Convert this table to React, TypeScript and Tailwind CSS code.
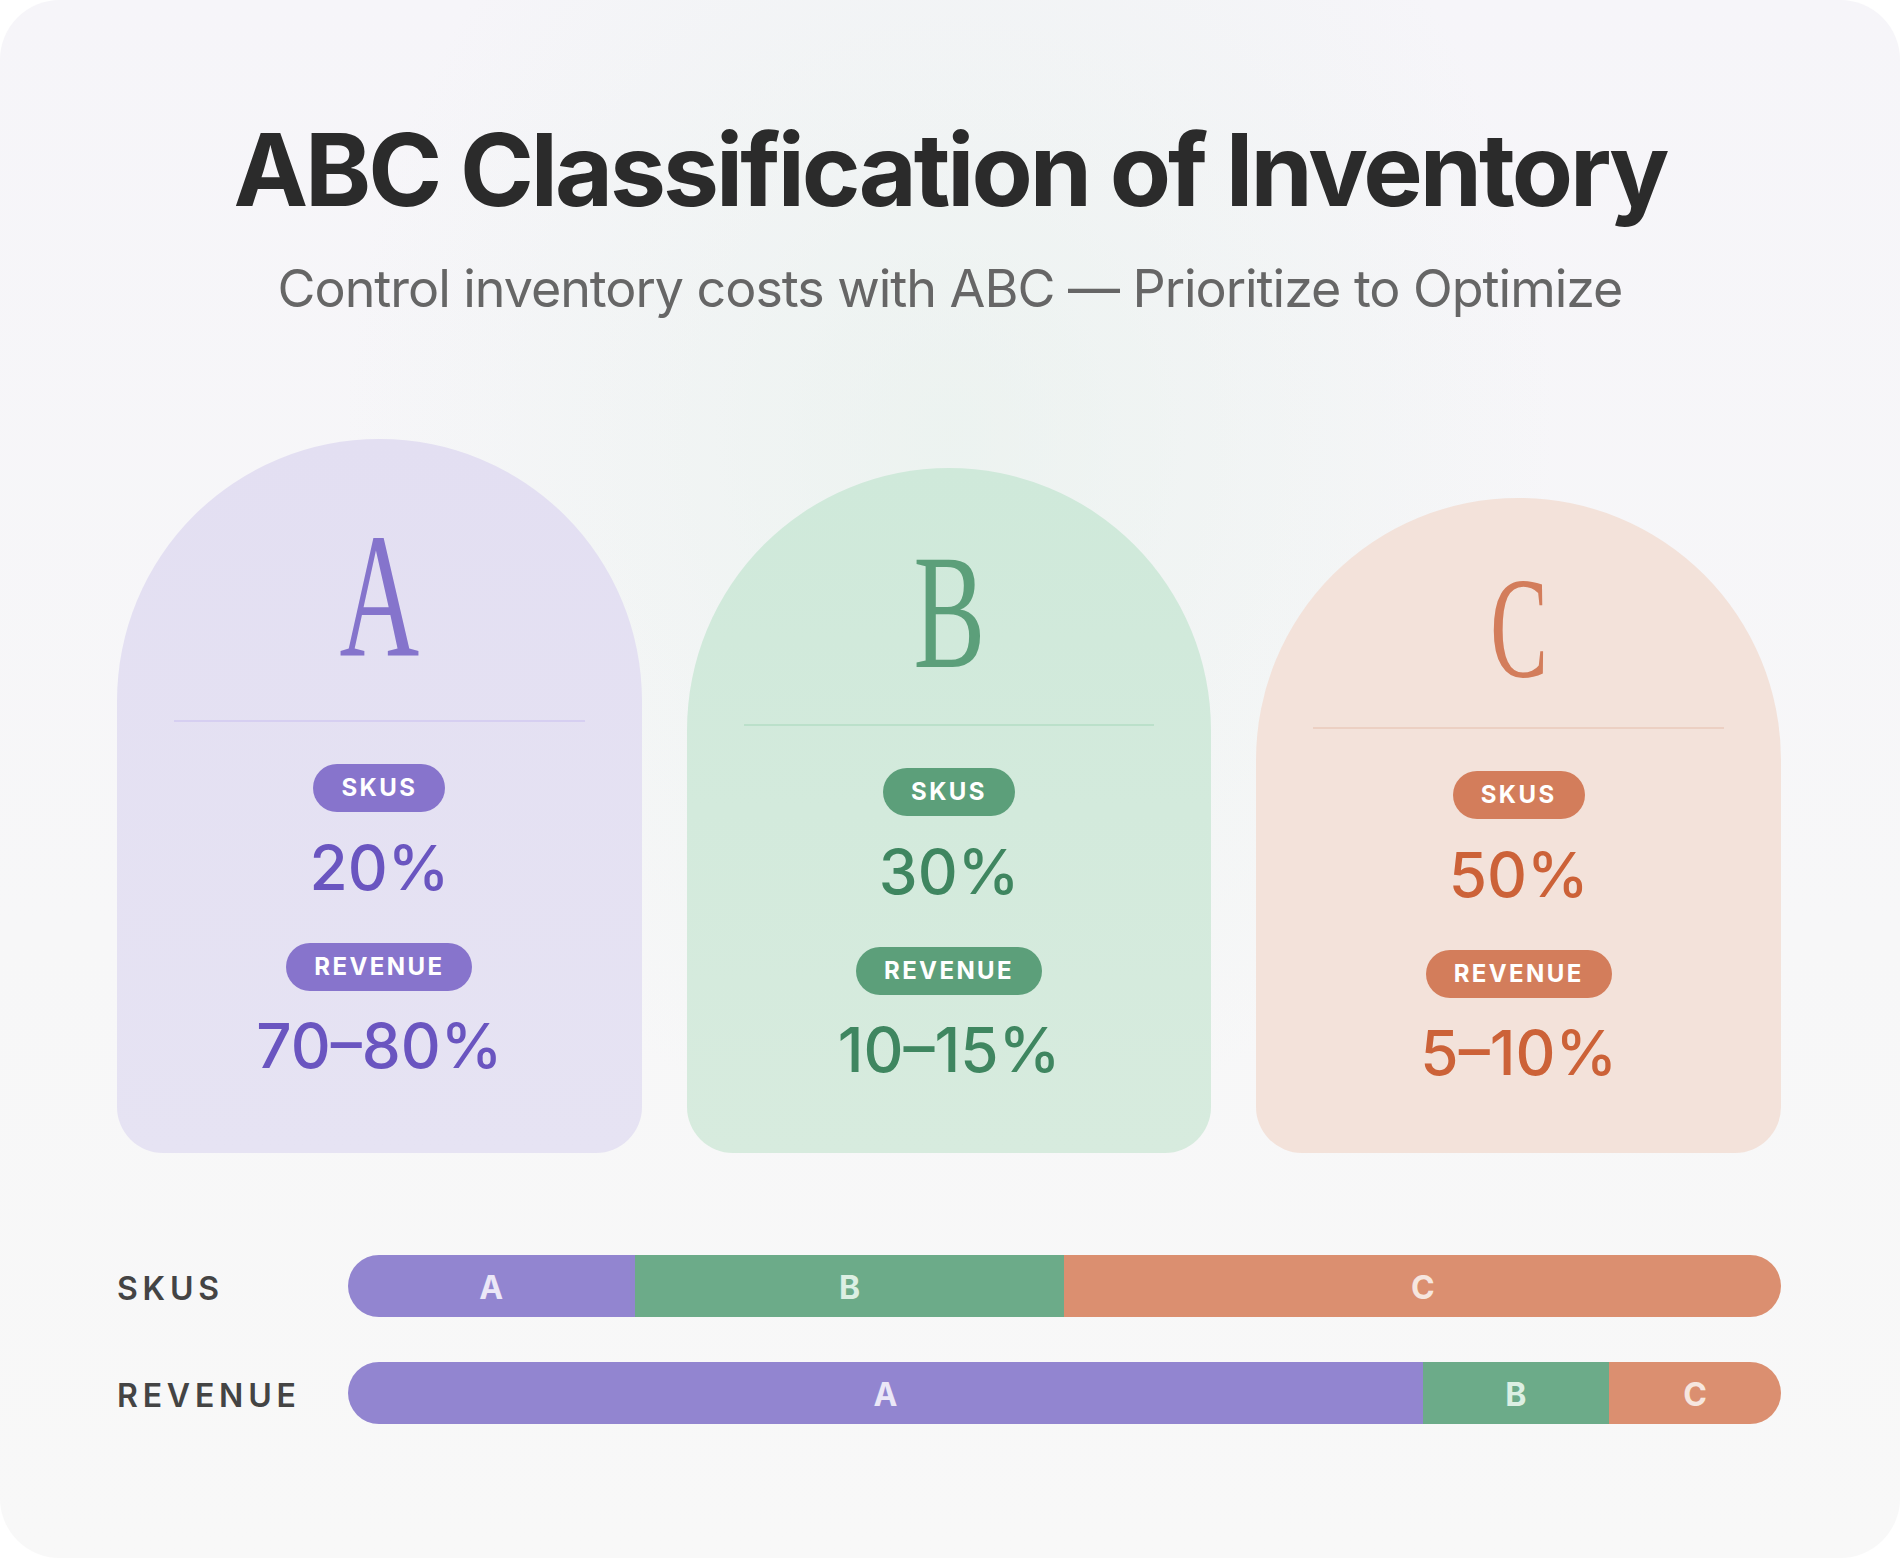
import React from 'react';

type Tier = {
  letter: string;
  skus: string;
  revenue: string;
  cardH: string;
  statsH: string;
  cardBg: string;
  letterCls: string;
  divider: string;
  pill: string;
  number: string;
};

const tiers: Tier[] = [
  {
    letter: 'A',
    skus: '20%',
    revenue: '70–80%',
    cardH: 'h-[714px]',
    statsH: 'h-[431px]',
    cardBg: 'bg-[linear-gradient(180deg,#e3dff2_0%,#e6e3f3_100%)]',
    letterCls: 'text-[178px] text-[#8574cc] scale-x-[0.62]',
    divider: 'bg-[#d6cff1]',
    pill: 'bg-[#8774cc]',
    number: 'text-[#6a55c0]',
  },
  {
    letter: 'B',
    skus: '30%',
    revenue: '10–15%',
    cardH: 'h-[685px]',
    statsH: 'h-[427px]',
    cardBg: 'bg-[linear-gradient(180deg,#cfe9da_0%,#d7ebde_100%)]',
    letterCls: 'text-[163px] text-[#5c9f7a] scale-x-[0.66]',
    divider: 'bg-[#bbe0ca]',
    pill: 'bg-[#5c9f7a]',
    number: 'text-[#3f8660]',
  },
  {
    letter: 'C',
    skus: '50%',
    revenue: '5–10%',
    cardH: 'h-[655px]',
    statsH: 'h-[424px]',
    cardBg: 'bg-[#f3e2da]',
    letterCls: 'text-[144px] text-[#d37d5b] scale-x-[0.6]',
    divider: 'bg-[#ecd0c3]',
    pill: 'bg-[#d37d5b]',
    number: 'text-[#cc6238]',
  },
];

const bars = [
  {
    label: 'SKUS',
    parts: [
      { key: 'A', cls: 'basis-[20%] bg-[#9285d0] text-[#ebe7f7]' },
      { key: 'B', cls: 'basis-[30%] bg-[#6cab89] text-[#dcefe3]' },
      { key: 'C', cls: 'basis-[50%] bg-[#db8f70] text-[#f6e6df]' },
    ],
  },
  {
    label: 'REVENUE',
    parts: [
      { key: 'A', cls: 'basis-[75%] bg-[#9285d0] text-[#ebe7f7]' },
      { key: 'B', cls: 'basis-[13%] bg-[#6cab89] text-[#dcefe3]' },
      { key: 'C', cls: 'basis-[12%] bg-[#db8f70] text-[#f6e6df]' },
    ],
  },
];

const Pill = ({ text, cls }: { text: string; cls: string }) => (
  <div className={`h-[48px] px-[28px] rounded-full flex items-center text-white text-[24px] font-bold tracking-[0.1em] ${cls}`}>
    {text}
  </div>
);

const TierCard = ({ tier }: { tier: Tier }) => (
  <div
    className={`flex-1 flex flex-col rounded-t-[262px] rounded-b-[46px] ${tier.cardH} ${tier.cardBg}`}
  >
    {/* big serif letter */}
    <div className="flex-1 flex items-center justify-center pt-[32px]">
      <span
        className={`leading-none ${tier.letterCls}`}
        style={{ fontFamily: '"Liberation Serif", serif' }}
      >
        {tier.letter}
      </span>
    </div>
    <div className={`mx-[57px] h-[2px] ${tier.divider}`} />

    {/* stats */}
    <div className={`flex flex-col items-center pt-[42px] ${tier.statsH}`}>
      <Pill text="SKUS" cls={tier.pill} />
      <div className={`mt-[25px] text-[62px] leading-none font-medium ${tier.number}`}>{tier.skus}</div>
      <div className="mt-[44px]">
        <Pill text="REVENUE" cls={tier.pill} />
      </div>
      <div className={`mt-[24px] text-[62px] leading-none font-medium ${tier.number}`}>{tier.revenue}</div>
    </div>
  </div>
);

export default function App() {
  return (
    <div className="w-[1900px] h-[1558px] bg-white" style={{ fontFamily: 'Inter, "Liberation Sans", sans-serif' }}>
      <div className="h-full rounded-[60px] bg-[radial-gradient(ellipse_at_50%_28%,rgba(228,240,233,0.55)_0%,rgba(246,245,249,0)_45%),linear-gradient(180deg,#f6f5f9_0%,#f7f7f8_60%,#f8f8f8_100%)] flex flex-col pt-[120px]">
        {/* heading */}
        <h1 className="text-center text-[100px] leading-none font-bold tracking-[-0.03em] text-[#2b2b2b]">
          ABC Classification of Inventory
        </h1>
        <p className="mt-[43px] text-center text-[52px] leading-none text-[#666666] tracking-[-0.02em]">
          Control inventory costs with ABC — Prioritize to Optimize
        </p>

        {/* tier cards */}
        <div className="mt-[124px] pl-[117px] pr-[119px] flex items-end gap-[45px]">
          {tiers.map((t) => (
            <TierCard key={t.letter} tier={t} />
          ))}
        </div>

        {/* distribution bars */}
        <div className="mt-[102px] pl-[117px] pr-[119px] flex flex-col gap-[45px]">
          {bars.map((b) => (
            <div key={b.label} className="flex items-center">
              <div className="w-[231px] shrink-0 pt-[6px] text-[32px] font-semibold tracking-[0.15em] text-[#444444]">
                {b.label}
              </div>
              <div className="flex-1 h-[62px] rounded-full overflow-hidden flex">
                {b.parts.map((p) => (
                  <div
                    key={p.key}
                    className={`flex items-center justify-center pt-[4px] text-[32px] font-bold ${p.cls}`}
                  >
                    {p.key}
                  </div>
                ))}
              </div>
            </div>
          ))}
        </div>
      </div>
    </div>
  );
}
